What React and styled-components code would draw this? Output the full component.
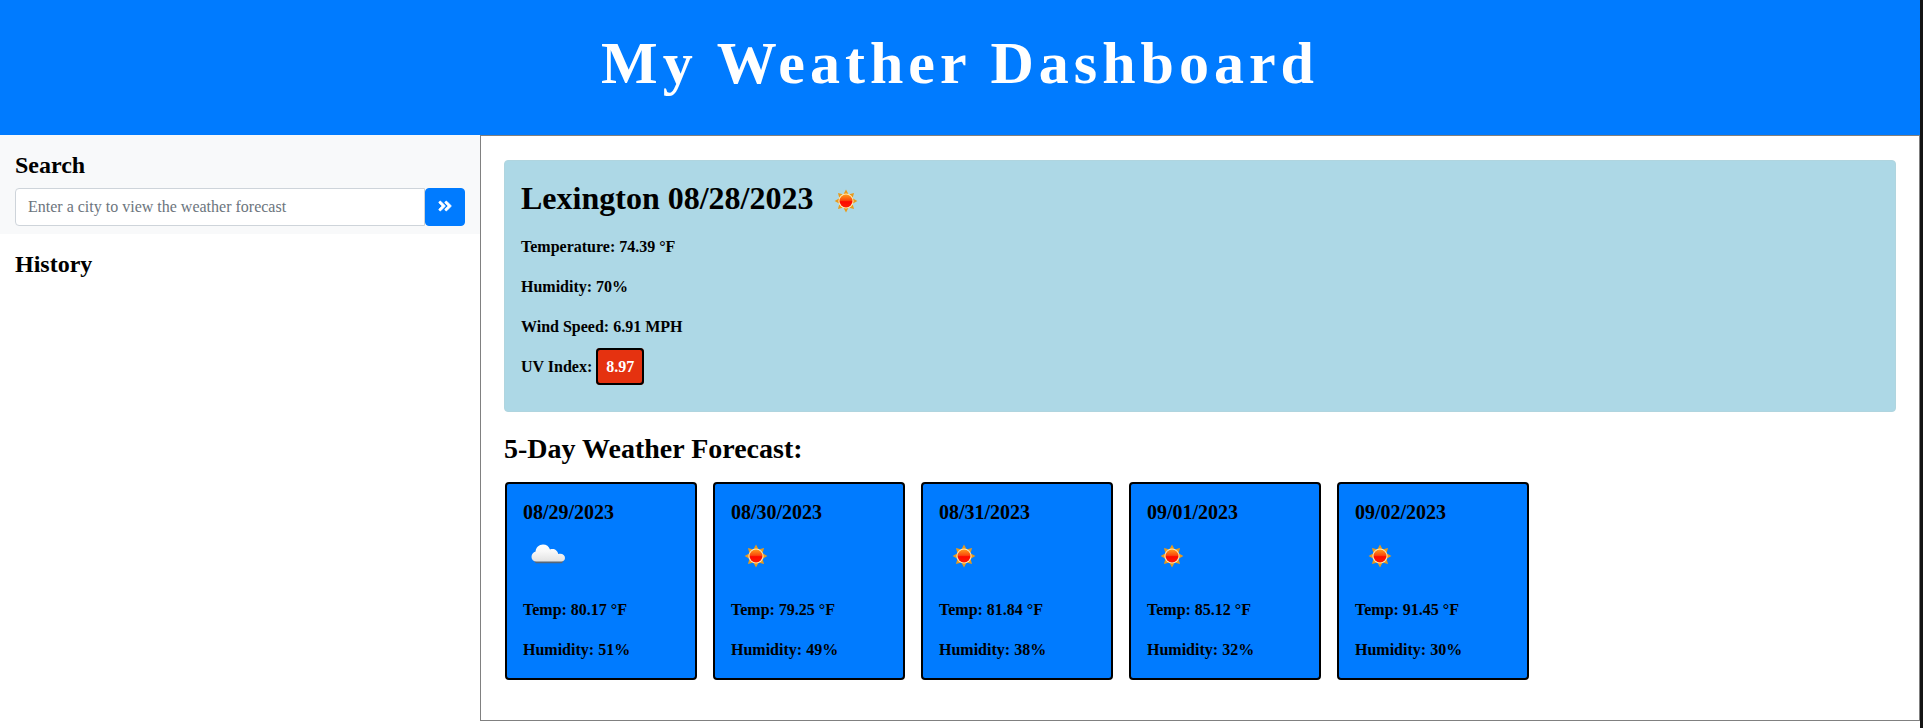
import React from 'react';
import styled, { createGlobalStyle } from 'styled-components';
import { FaAngleDoubleRight } from 'react-icons/fa';

const GlobalStyle = createGlobalStyle`
  *, *::before, *::after { box-sizing: border-box; }
  body {
    margin: 0;
    background: #fff;
    color: #000;
    font-family: "Liberation Serif", "Times New Roman", serif;
    font-size: 16px;
    line-height: 24px;
  }
  h1, h2, h3, p { margin: 0; }
`;

const Page = styled.div`
  min-height: 100vh;
  border-right: 3px solid #141414;
`;

const Header = styled.header`
  padding: 27px 16px 36px;
  background: #007bff;
  color: #fff;
  text-align: center;
`;

const Title = styled.h1`
  font-size: 60px;
  line-height: 72px;
  letter-spacing: 5px;
`;

const Columns = styled.div`
  display: grid;
  grid-template-columns: 1fr 3fr;
  align-items: start;
`;

const SidebarSection = styled.section`
  padding: 15px 15px 8px;
  background: ${({ $shaded }) => ($shaded ? '#f8f9fa' : 'transparent')};
`;

const SidebarTitle = styled.h2`
  margin-bottom: 8px;
  font-size: 24px;
  line-height: 30px;
`;

const SearchForm = styled.form`
  display: flex;
`;

const CityInput = styled.input`
  flex: 1;
  min-width: 0;
  height: 38px;
  padding: 6px 12px;
  border: 1px solid #ced4da;
  border-radius: 4px 0 0 4px;
  background: #fff;
  color: #495057;
  font: inherit;

  &::placeholder {
    color: #6c757d;
    opacity: 1;
  }
`;

const SearchButton = styled.button`
  display: flex;
  align-items: center;
  justify-content: center;
  width: 40px;
  height: 38px;
  padding: 0 0 2px;
  border: 1px solid #007bff;
  border-radius: 4px;
  background: #007bff;
  color: #fff;
  font-size: 16px;
  cursor: pointer;

  svg {
    stroke: currentColor;
    stroke-width: 20px;
  }
`;

const Main = styled.main`
  min-width: 0;
  padding: 24px 23px 40px;
  border: 1px solid #808080;
`;

const CurrentCard = styled.section`
  display: grid;
  gap: 16px;
  padding: 16px 16px 32px;
  border: 1px solid #b0d5df;
  border-radius: 4px;
  background: #add8e6;
  font-weight: bold;
`;

const CurrentTitle = styled.h2`
  margin-bottom: -8px;
  font-size: 32px;
  line-height: 38px;
`;

const UvBadge = styled.span`
  padding: 8px;
  border: 2px solid #000;
  border-radius: 4px;
  background: #e53210;
  color: #fff;
`;

const ForecastTitle = styled.h2`
  margin: 20px 0 16px;
  font-size: 28px;
  line-height: 34px;
`;

const ForecastList = styled.div`
  display: flex;
  flex-wrap: wrap;
  gap: 16px;
  padding-left: 1px;
`;

const DayCard = styled.article`
  display: grid;
  gap: 16px;
  width: 192px;
  padding: 16px;
  border: 2px solid #000;
  border-radius: 4px;
  background: #007bff;
  font-weight: bold;
`;

const DayTitle = styled.h3`
  margin-bottom: -8px;
  font-size: 20px;
  line-height: 24px;
`;

const WeatherSvg = styled.svg`
  width: 50px;
  height: 50px;
  vertical-align: middle;
`;

const rays = [0, 45, 90, 135, 180, 225, 270, 315];

function SunIcon({ id }) {
  return (
    <WeatherSvg viewBox="0 1 50 50" role="img" aria-label="Clear sky">
      <defs>
        <linearGradient id={id} x1="0" y1="0" x2="0" y2="1">
          <stop offset="0" stopColor="#ff9a1c" />
          <stop offset="0.45" stopColor="#fb4a0c" />
          <stop offset="0.55" stopColor="#fc0a00" />
          <stop offset="1" stopColor="#ff1a00" />
        </linearGradient>
      </defs>
      {rays.map((angle) => (
        <path
          key={angle}
          d="M22.6 18 L25 13.6 L27.4 18 Z"
          fill="#e89a1c"
          transform={`rotate(${angle} 25 25)`}
        />
      ))}
      <circle cx="25" cy="25" r="7.6" fill="#ffe9b0" />
      <circle cx="25" cy="25" r="6.5" fill={`url(#${id})`} />
    </WeatherSvg>
  );
}

function CloudIcon({ id }) {
  const shape =
    'M13.5 29.5 C10.4 29.5 8.5 27.6 8.5 25 C8.5 22.3 10.3 20.4 12.6 19.6 C12.9 15.4 16 12.5 20 12.5 C23.4 12.5 26 14.5 27 17.4 C30.8 16 34.8 18.2 35.2 22.1 C39.2 21.2 42 23.1 42 25.9 C42 28 40.4 29.5 38.3 29.5 Z';
  return (
    <WeatherSvg viewBox="0 0 50 50" role="img" aria-label="Cloudy">
      <defs>
        <linearGradient id={id} x1="0" y1="0" x2="0" y2="1">
          <stop offset="0" stopColor="#ffffff" />
          <stop offset="0.4" stopColor="#f8f8f8" />
          <stop offset="1" stopColor="#e2e2e2" />
        </linearGradient>
      </defs>
      <path d="M10 28 H41 L39 31.2 H13 Z" fill="#56677a" />
      <path d={shape} fill={`url(#${id})`} />
    </WeatherSvg>
  );
}

const forecast = [
  { date: '08/29/2023', Icon: CloudIcon, temp: '80.17', humidity: 51 },
  { date: '08/30/2023', Icon: SunIcon, temp: '79.25', humidity: 49 },
  { date: '08/31/2023', Icon: SunIcon, temp: '81.84', humidity: 38 },
  { date: '09/01/2023', Icon: SunIcon, temp: '85.12', humidity: 32 },
  { date: '09/02/2023', Icon: SunIcon, temp: '91.45', humidity: 30 },
];

export default function App() {
  return (
    <>
      <GlobalStyle />
      <Page>
        <Header>
          <Title>My Weather Dashboard</Title>
        </Header>
        <Columns>
          <aside>
            <SidebarSection $shaded>
              <SidebarTitle>
                <label htmlFor="city">Search</label>
              </SidebarTitle>
              <SearchForm onSubmit={(event) => event.preventDefault()}>
                <CityInput
                  id="city"
                  type="text"
                  placeholder="Enter a city to view the weather forecast"
                />
                <SearchButton type="submit" aria-label="Search">
                  <FaAngleDoubleRight />
                </SearchButton>
              </SearchForm>
            </SidebarSection>
            <SidebarSection>
              <SidebarTitle>History</SidebarTitle>
            </SidebarSection>
          </aside>
          <Main>
            <CurrentCard>
              <CurrentTitle>
                Lexington 08/28/2023 <SunIcon id="sun-today" />
              </CurrentTitle>
              <p>Temperature: 74.39 °F</p>
              <p>Humidity: 70%</p>
              <p>Wind Speed: 6.91 MPH</p>
              <p>
                UV Index: <UvBadge>8.97</UvBadge>
              </p>
            </CurrentCard>
            <ForecastTitle>5-Day Weather Forecast:</ForecastTitle>
            <ForecastList>
              {forecast.map(({ date, Icon, temp, humidity }) => (
                <DayCard key={date}>
                  <DayTitle>{date}</DayTitle>
                  <p>
                    <Icon id={`icon-${date.replaceAll('/', '-')}`} />
                  </p>
                  <p>Temp: {temp} °F</p>
                  <p>Humidity: {humidity}%</p>
                </DayCard>
              ))}
            </ForecastList>
          </Main>
        </Columns>
      </Page>
    </>
  );
}
